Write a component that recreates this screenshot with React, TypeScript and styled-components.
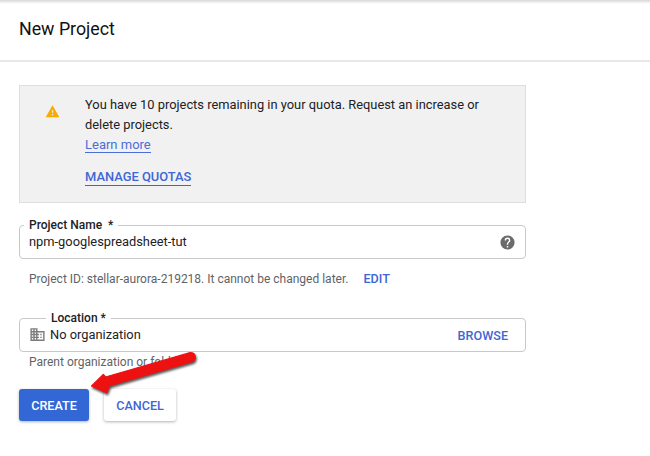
import React from 'react';
import styled, { createGlobalStyle } from 'styled-components';

const GlobalStyle = createGlobalStyle`
  html, body {
    margin: 0;
    padding: 0;
    background: #fff;
  }
  body {
    font-family: Roboto, "Liberation Sans", sans-serif;
    color: #202124;
  }
`;

const Page = styled.div`
  position: relative;
  width: 650px;
  height: 456px;
  overflow: hidden;
  background: linear-gradient(#d8d8d8, #fff 4px);
`;

const Header = styled.header`
  height: 62px;
  box-sizing: border-box;
  padding: 18px 19px 0;
  border-bottom: 2px solid #e8e8e8;
`;

const Title = styled.h1`
  margin: 0;
  font-size: 17.8px;
  line-height: 22px;
  font-weight: 400;
  color: #111;
`;

const Content = styled.main`
  width: 507px;
  margin-left: 19px;
  padding-top: 23px;
`;

const Notice = styled.section`
  height: 118px;
  box-sizing: border-box;
  display: flex;
  padding: 9px 0 0 25px;
  background: #f1f1f1;
  border: 1px solid #dedede;
`;

const WarnIcon = styled.svg`
  width: 15px;
  height: 15px;
  margin: 9px 25px 0 0;
  flex: none;
  fill: #f9ab00;
`;

const NoticeBody = styled.div`
  width: 410px;
  font-size: 13px;
  line-height: 20px;
`;

const NoticeText = styled.p`
  margin: 0;
  font-size: 12.87px;
  color: #202124;
`;

const LinkText = styled.a`
  color: #4a6fd8;
  border-bottom: 1px solid #4a6fd8;
`;

const ActionLink = styled.a`
  display: inline-block;
  margin-top: 14px;
  font-size: 12.9px;
  line-height: 16px;
  font-weight: 500;
  color: #3f66d4;
  border-bottom: 1px solid #3f66d4;
`;

const Field = styled.div<{ $top: number }>`
  position: relative;
  height: 34px;
  box-sizing: border-box;
  margin-top: ${({ $top }) => $top}px;
  display: flex;
  align-items: center;
  padding: 0 9px;
  border: 1px solid #c9c9c9;
  border-radius: 4px;
`;

const FieldLabel = styled.label<{ $left: number }>`
  position: absolute;
  top: -8px;
  left: ${({ $left }) => $left}px;
  padding: 0 5px;
  background: #fff;
  font-size: 12px;
  line-height: 14px;
  font-weight: 500;
  color: #202124;
`;

const Value = styled.span`
  flex: 1;
  font-size: 12.85px;
  line-height: 16px;
  color: #202124;
`;

const HelpIcon = styled.svg`
  width: 17px;
  height: 17px;
  fill: #6b6b6b;
`;

const OrgIcon = styled.svg`
  width: 17px;
  height: 17px;
  margin: 0 4px 2px 0;
  fill: #7d7d7d;
`;

const Helper = styled.div<{ $top: number }>`
  display: flex;
  margin: ${({ $top }) => $top}px 0 0 10px;
  font-size: 12px;
  line-height: 14px;
  color: #5f6368;
`;

const EditLink = styled.a`
  margin-left: 15px;
  font-size: 12.6px;
  font-weight: 500;
  color: #3f66d4;
`;

const BrowseLink = styled.a`
  margin-right: 8px;
  font-size: 12.6px;
  font-weight: 500;
  color: #3f66d4;
`;

const Actions = styled.div`
  display: flex;
  gap: 15px;
  margin-top: 20px;
`;

const Button = styled.button<{ $primary?: boolean }>`
  height: 32px;
  width: ${({ $primary }) => ($primary ? '70px' : '72px')};
  padding: 0;
  border: 0;
  border-radius: 3px;
  font-family: inherit;
  font-size: 12.6px;
  font-weight: 500;
  background: ${({ $primary }) => ($primary ? '#3367d6' : '#fff')};
  color: ${({ $primary }) => ($primary ? '#fff' : '#3f66d4')};
  box-shadow: 0 1px 3px rgba(60, 64, 67, 0.4);
`;

const Arrow = styled.svg`
  position: absolute;
  left: 85px;
  top: 345px;
  width: 120px;
  height: 55px;
  filter: drop-shadow(1px 2px 1px rgba(0, 0, 0, 0.65));
`;

export default function App() {
  return (
    <Page>
      <GlobalStyle />
      <Header>
        <Title>New Project</Title>
      </Header>
      <Content>
        <Notice>
          <WarnIcon viewBox="0 0 24 24">
            <path d="M1 21h22L12 2 1 21zm12-3h-2v-2h2v2zm0-4h-2v-4h2v4z" />
          </WarnIcon>
          <NoticeBody>
            <NoticeText>You have 10 projects remaining in your quota. Request an increase or delete projects.</NoticeText>
            <LinkText>Learn more</LinkText>
            <br />
            <ActionLink>MANAGE QUOTAS</ActionLink>
          </NoticeBody>
        </Notice>
        <Field $top={22}>
          <FieldLabel $left={4}>Project Name&nbsp; *</FieldLabel>
          <Value>npm-googlespreadsheet-tut</Value>
          <HelpIcon viewBox="0 0 24 24">
            <path d="M12 2a10 10 0 1 0 0 20 10 10 0 0 0 0-20zm1 17h-2v-2h2v2zm2.07-7.75-.9.92C13.45 12.9 13 13.5 13 15h-2v-.5c0-1.1.45-2.1 1.17-2.83l1.24-1.26c.37-.36.59-.86.59-1.41a2 2 0 1 0-4 0H8a4 4 0 1 1 8 0c0 .88-.36 1.68-.93 2.25z" />
          </HelpIcon>
        </Field>
        <Helper $top={13}>
          Project ID: stellar-aurora-219218. It cannot be changed later.
          <EditLink>EDIT</EditLink>
        </Helper>
        <Field $top={32}>
          <FieldLabel $left={26}>Location *</FieldLabel>
          <OrgIcon viewBox="0 0 24 24">
            <path d="M12 7V3H2v18h20V7H12zM6 19H4v-2h2v2zm0-4H4v-2h2v2zm0-4H4V9h2v2zm0-4H4V5h2v2zm4 12H8v-2h2v2zm0-4H8v-2h2v2zm0-4H8V9h2v2zm0-4H8V5h2v2zm10 12h-8v-2h2v-2h-2v-2h2v-2h-2V9h8v10zm-2-8h-2v2h2v-2zm0 4h-2v2h2v-2z" />
          </OrgIcon>
          <Value>No organization</Value>
          <BrowseLink>BROWSE</BrowseLink>
        </Field>
        <Helper $top={3}>Parent organization or folder</Helper>
        <Actions>
          <Button $primary>CREATE</Button>
          <Button>CANCEL</Button>
        </Actions>
      </Content>
      <Arrow viewBox="0 0 120 55">
        <path d="M6.5 41 L18.3 29.5 L20.5 32 L105 7.7 Q110 7.5 110.3 12 Q110.3 15.5 107 16.7 L24.5 40.7 L21.7 47.8 Z" fill="#ee1111" stroke="#ee1111" strokeWidth="1.2" strokeLinejoin="round" />
      </Arrow>
    </Page>
  );
}
